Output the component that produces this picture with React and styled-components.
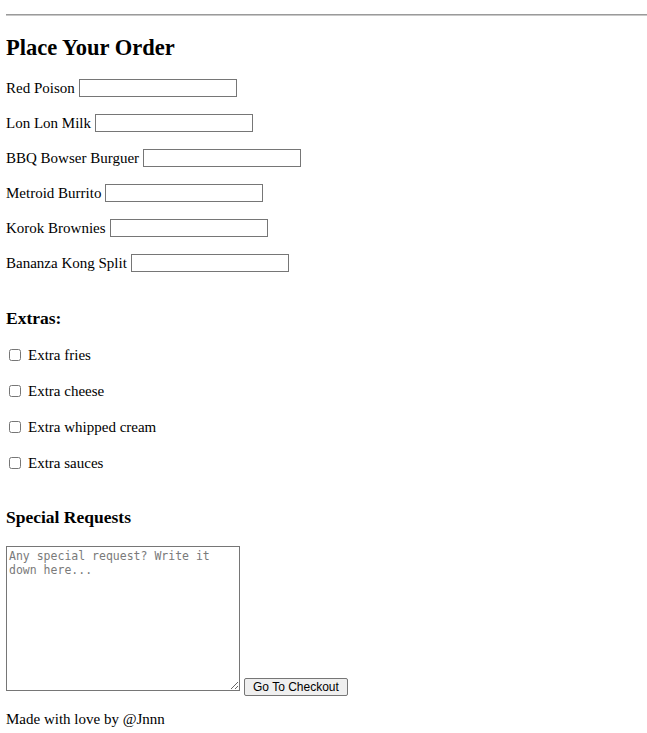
import React from 'react'
import styled, { createGlobalStyle } from 'styled-components'

const GlobalStyle = createGlobalStyle`
  html, body {
    margin: 0;
    padding: 0;
    background: #ffffff;
  }
  body {
    font-family: "Liberation Serif", "Times New Roman", serif;
    font-size: 15px;
    color: #000000;
  }
`

const Page = styled.main`
  padding: 14px 0 20px 6px;
`

const Rule = styled.hr`
  margin: 0;
  height: 0;
  border: none;
  border-top: 1px solid #9a9a9a;
  border-bottom: 1px solid #c8c8c8;
`

const Title = styled.h2`
  margin: 19px 0 18px;
  font-size: 22.5px;
  line-height: 26px;
  font-weight: bold;
`

const SectionTitle = styled.h3`
  margin: ${(p) => p.$top}px 0 ${(p) => p.$bottom}px;
  font-size: 17.5px;
  line-height: 20px;
  font-weight: bold;
`

const ItemList = styled.div`
  display: flex;
  flex-direction: column;
  gap: ${(p) => p.$gap}px;
`

const Row = styled.label`
  display: flex;
  align-items: center;
  height: 18px;
  line-height: 18px;
  gap: 4px;
`

const TextInput = styled.input`
  box-sizing: border-box;
  width: 158px;
  height: 18px;
  margin: 0;
  padding: 1px 2px;
  border: 1px solid #767676;
  border-radius: 0;
  font-family: "Liberation Sans", Arial, sans-serif;
  font-size: 12.5px;
  background: #ffffff;
`

const CheckRow = styled.label`
  display: flex;
  align-items: center;
  height: 18px;
  line-height: 18px;
`

const Check = styled.input`
  width: 12px;
  height: 12px;
  margin: 0 7px 0 3px;
`

const Bottom = styled.div`
  display: flex;
  align-items: flex-end;
  gap: 4px;
`

const Notes = styled.textarea`
  box-sizing: border-box;
  width: 234px;
  height: 145px;
  margin: 0 0 5px;
  padding: 2px 2px;
  border: 1px solid #767676;
  border-radius: 0;
  font-family: "DejaVu Sans Mono", "Liberation Mono", monospace;
  font-size: 11.5px;
  line-height: 14px;
  &::placeholder {
    color: #7a7a7a;
  }
`

const Checkout = styled.button`
  box-sizing: border-box;
  height: 18px;
  padding: 0 8px;
  margin: 0;
  border: 1px solid #767676;
  border-radius: 2px;
  background: #efefef;
  font-family: "Liberation Sans", Arial, sans-serif;
  font-size: 12px;
  line-height: 16px;
  color: #000000;
`

const Footer = styled.p`
  margin: 14px 0 0;
  line-height: 18px;
`

const items = [
  'Red Poison',
  'Lon Lon Milk',
  'BBQ Bowser Burguer',
  'Metroid Burrito',
  'Korok Brownies',
  'Bananza Kong Split',
]

const extras = ['Extra fries', 'Extra cheese', 'Extra whipped cream', 'Extra sauces']

const App = () => {
  return (
    <>
      <GlobalStyle />
      <Page>
        <Rule />
        <Title>Place Your Order</Title>
        <ItemList $gap={17}>
          {items.map((name) => (
            <Row key={name}>
              {name}
              <TextInput type="text" />
            </Row>
          ))}
        </ItemList>

        <SectionTitle $top={36} $bottom={18}>Extras:</SectionTitle>
        <ItemList $gap={18}>
          {extras.map((name) => (
            <CheckRow key={name}>
              <Check type="checkbox" />
              {name}
            </CheckRow>
          ))}
        </ItemList>

        <SectionTitle $top={35} $bottom={19}>Special Requests</SectionTitle>
        <Bottom>
          <Notes placeholder="Any special request? Write it down here..." />
          <Checkout type="button">Go To Checkout</Checkout>
        </Bottom>
        <Footer>Made with love by @Jnnn</Footer>
      </Page>
    </>
  )
}

export default App
